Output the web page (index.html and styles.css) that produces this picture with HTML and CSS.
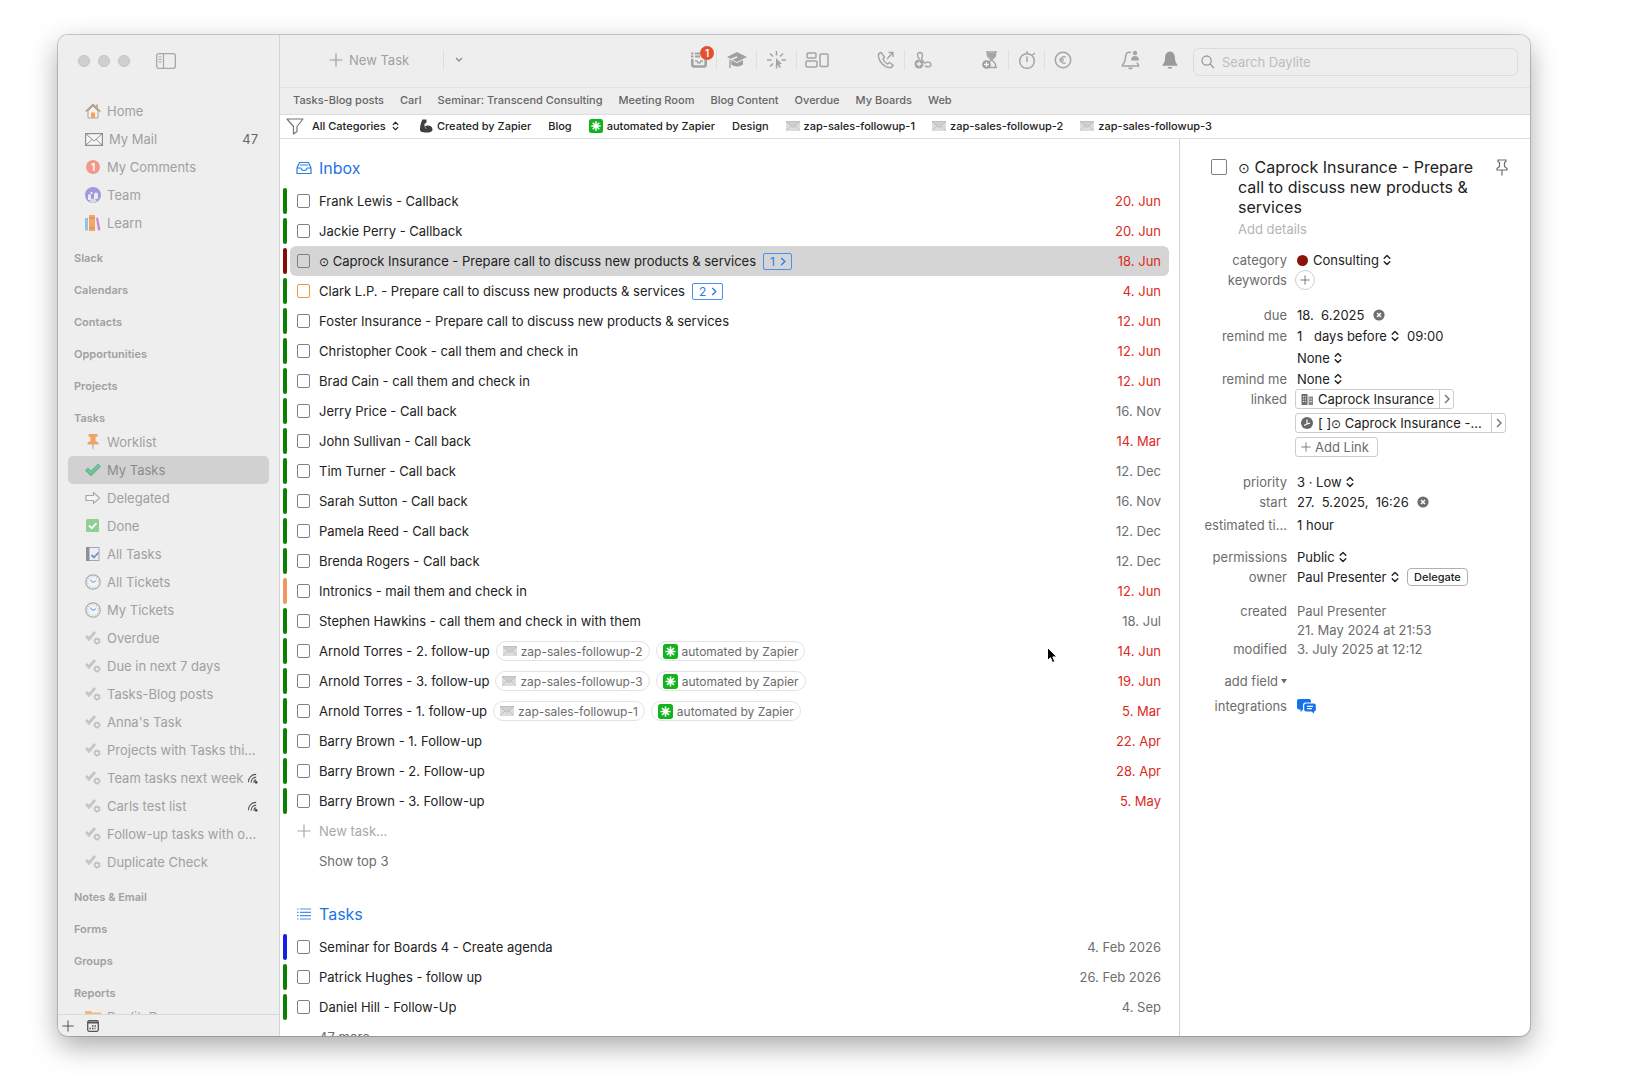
FILE: index.html
```html
<!DOCTYPE html>
<html lang="en">
<head>
    <meta charset="UTF-8">
    <meta name="viewport" content="width=device-width, initial-scale=1.0">
    <title>Daylite - My Tasks</title>
    <link rel="stylesheet" href="styles.css">
</head>
<body>
    <!-- shared icons -->
    <svg class="sprite" aria-hidden="true">
        <symbol id="smart" viewBox="0 0 16 16">
            <path d="M1 6l3 3 6-7" fill="none" stroke="#c6c6c6" stroke-width="3"/>
            <circle cx="12" cy="11" r="2.2" fill="none" stroke="#bdbdbd" stroke-width="1.4"/>
            <circle cx="12" cy="11" r="3.2" fill="none" stroke="#bdbdbd" stroke-width="1" stroke-dasharray="1.2 1.3"/>
        </symbol>
        <symbol id="ticket" viewBox="0 0 16 16">
            <circle cx="8" cy="8" r="7.2" fill="#f4f4f4" stroke="#a9a9ab" stroke-width="1.2"/>
            <circle cx="8" cy="8" r="5.4" fill="none" stroke="#b5b5b8" stroke-width="1.3" stroke-dasharray=".8 2.03"/>
            <path d="M5 5.6L8 8.4l3-1.6" fill="none" stroke="#8cb4e6" stroke-width="1.2"/>
        </symbol>
        <symbol id="shared" viewBox="0 0 12 12">
            <path d="M1.5 10C1.5 5 5 1.5 10 1.5M4.5 10.500c0-3.500 2.500-6 5.500-6M7.500 10.500c0-2 1-3 2.500-3" fill="none" stroke="#555" stroke-width="1.100"/>
            <circle cx="10" cy="10.200" r="1.400" fill="#444"/>
        </symbol>
        <symbol id="updown" viewBox="0 0 8 12">
            <path d="M1.200 4.300L4 1.500l2.800 2.800M1.200 7.700L4 10.500l2.800-2.800" fill="none" stroke="currentColor" stroke-width="1.400" stroke-linecap="round" stroke-linejoin="round"/>
        </symbol>
        <symbol id="mail" viewBox="0 0 14 10">
            <rect width="14" height="10" rx="1" fill="#dcdcdc"/>
            <path d="M0 9.500L5 5M14 9.500L9 5" stroke="#c2c2c2" fill="none"/>
            <path d="M0 .5h14L7 6.500z" fill="#cfcfcf" stroke="#b4b4b4" stroke-width=".7"/>
        </symbol>
        <symbol id="zap" viewBox="0 0 14 14">
            <rect width="14" height="14" rx="2.500" fill="#10b51c"/>
            <path d="M7 2.300v9.400M2.300 7h9.400M3.700 3.700l6.600 6.600M10.300 3.700l-6.600 6.600" stroke="#fff" stroke-width="1.500"/>
        </symbol>
        <symbol id="plus" viewBox="0 0 14 14">
            <path d="M7 .5v13M.5 7h13" stroke="currentColor" stroke-width="1.200" fill="none"/>
        </symbol>
        <symbol id="right" viewBox="0 0 6 10">
            <path d="M1 1l4 4-4 4" fill="none" stroke="currentColor" stroke-width="1.500"/>
        </symbol>
        <symbol id="clear" viewBox="0 0 12 12">
            <circle cx="6" cy="6" r="5.600" fill="#6e6e6e"/>
            <path d="M4 4l4 4M8 4L4 8" stroke="#fff" stroke-width="1.500"/>
        </symbol>
    </svg>

    <div class="window">
        <aside class="sidebar">
            <div class="titlebar">
                <span class="light"></span><span class="light"></span><span class="light"></span>
                <button class="plain toggle" aria-label="Toggle sidebar">
                    <svg width="20" height="16" viewBox="0 0 20 16"><rect x=".7" y=".7" width="18.600" height="14.600" rx="2" fill="none" stroke="#a6a6a6" stroke-width="1.300"/><path d="M7.500 1v14M2.500 4h3M2.500 6.500h3M2.500 9h3" stroke="#a6a6a6" stroke-width="1.200"/></svg>
                </button>
            </div>
            <nav class="nav">
                <a class="nav-item" href="#">
                    <svg class="nav-icon" viewBox="0 0 16 16"><path d="M3 8v7h10V8L8 3z" fill="#f4f1ee" stroke="#a9a39c"/><path d="M.8 8.500L8 1.500l7.200 7" fill="none" stroke="#b29a80" stroke-width="1.500"/><path d="M12 1.500v3" stroke="#b29a80" stroke-width="1.500"/><rect x="6" y="9.500" width="4" height="5.500" fill="#f2a262"/></svg>
                    <span class="nav-text">Home</span>
                </a>
                <a class="nav-item wide" href="#">
                    <svg class="nav-icon" viewBox="0 0 18 13"><rect x=".6" y=".6" width="16.800" height="11.800" fill="#f6f6f6" stroke="#8f8f92" stroke-width="1.200"/><path d="M1 1l8 7 8-7M1 12l6-5.600M17 12l-6-5.600" fill="none" stroke="#8f8f92"/></svg>
                    <span class="nav-text">My Mail</span>
                    <span class="count">47</span>
                </a>
                <a class="nav-item" href="#">
                    <span class="comment-badge">1</span>
                    <span class="nav-text">My Comments</span>
                </a>
                <a class="nav-item" href="#">
                    <svg class="nav-icon" viewBox="0 0 16 16"><circle cx="8" cy="8" r="8" fill="#9d9bdc"/><path d="M3 13V8.500a1.500 1.500 0 013 0V13zM9 12V7.500a2 2 0 014 0V12z" fill="#eceaf8"/><path d="M4.500 15a8 8 0 007.500-.3l-2-3H6z" fill="#d9dcd4"/><circle cx="6.500" cy="6" r="1" fill="#fff"/></svg>
                    <span class="nav-text">Team</span>
                </a>
                <a class="nav-item" href="#">
                    <svg class="nav-icon" viewBox="0 0 16 16"><rect x="0" y="3" width="3" height="12.500" fill="#8fc3ea"/><rect x="4" y="0" width="6" height="16" fill="#f1a766"/><path d="M4 3h6M4 13h6" stroke="#d98b4b"/><path d="M11 3l2-.5 2.500 12.500-2.500.5z" fill="#c58bd6"/></svg>
                    <span class="nav-text">Learn</span>
                </a>

                <h2 class="nav-head">Slack</h2>
                <h2 class="nav-head">Calendars</h2>
                <h2 class="nav-head">Contacts</h2>
                <h2 class="nav-head">Opportunities</h2>
                <h2 class="nav-head">Projects</h2>
                <h2 class="nav-head">Tasks</h2>
                <a class="nav-item" href="#">
                    <svg class="nav-icon" viewBox="0 0 16 16"><path d="M7.300 9h1.400v5L8 16l-.7-2z" fill="#b5b5b5"/><path d="M3.500 0h9v2.500l-2 .5v4l3 1.500V10.500h-11V8.500l3-1.500V3l-2-.5z" fill="#eda465"/></svg>
                    <span class="nav-text">Worklist</span>
                </a>
                <a class="nav-item active" href="#">
                    <svg class="nav-icon" viewBox="0 0 16 16"><path d="M1.500 7l4.500 4.500L14.500 3" fill="none" stroke="#7d9a8c" stroke-width="4"/><path d="M2 7.200l4 4L14 3.300" fill="none" stroke="#5fcf98" stroke-width="2.600"/></svg>
                    <span class="nav-text">My Tasks</span>
                </a>
                <a class="nav-item" href="#">
                    <svg class="nav-icon" viewBox="0 0 16 16"><path d="M1 5.500h7.500V2.500L14.500 8l-6 5.500v-3H1z" fill="#f5f5f7" stroke="#a8a8ae" stroke-width="1.200"/></svg>
                    <span class="nav-text">Delegated</span>
                </a>
                <a class="nav-item" href="#">
                    <svg class="nav-icon" viewBox="0 0 16 16"><rect x="1" y="1" width="13" height="13" rx="1.500" fill="#8fcf93"/><path d="M4 7.500l2.800 2.800L11.500 5" fill="none" stroke="#fff" stroke-width="1.800"/></svg>
                    <span class="nav-text">Done</span>
                </a>
                <a class="nav-item" href="#">
                    <svg class="nav-icon" viewBox="0 0 16 16"><rect x="1.500" y="1.500" width="12.500" height="13" fill="#eceef3" stroke="#a3a6b0"/><rect x="1" y="1" width="3.500" height="14" fill="#8c8f9c"/><path d="M6.500 9l2.500 2.500 4.500-5" fill="none" stroke="#7492c0" stroke-width="1.800"/></svg>
                    <span class="nav-text">All Tasks</span>
                </a>
                <a class="nav-item" href="#"><svg class="nav-icon"><use href="#ticket"/></svg><span class="nav-text">All Tickets</span></a>
                <a class="nav-item" href="#"><svg class="nav-icon"><use href="#ticket"/></svg><span class="nav-text">My Tickets</span></a>
                <a class="nav-item" href="#"><svg class="nav-icon"><use href="#smart"/></svg><span class="nav-text">Overdue</span></a>
                <a class="nav-item" href="#"><svg class="nav-icon"><use href="#smart"/></svg><span class="nav-text">Due in next 7 days</span></a>
                <a class="nav-item" href="#"><svg class="nav-icon"><use href="#smart"/></svg><span class="nav-text">Tasks-Blog posts</span></a>
                <a class="nav-item" href="#"><svg class="nav-icon"><use href="#smart"/></svg><span class="nav-text">Anna's Task</span></a>
                <a class="nav-item" href="#"><svg class="nav-icon"><use href="#smart"/></svg><span class="nav-text">Projects with Tasks thi...</span></a>
                <a class="nav-item" href="#"><svg class="nav-icon"><use href="#smart"/></svg><span class="nav-text">Team tasks next week</span><svg class="shared"><use href="#shared"/></svg></a>
                <a class="nav-item" href="#"><svg class="nav-icon"><use href="#smart"/></svg><span class="nav-text">Carls test list</span><svg class="shared"><use href="#shared"/></svg></a>
                <a class="nav-item" href="#"><svg class="nav-icon"><use href="#smart"/></svg><span class="nav-text">Follow-up tasks with o...</span></a>
                <a class="nav-item" href="#"><svg class="nav-icon"><use href="#smart"/></svg><span class="nav-text">Duplicate Check</span></a>

                <h2 class="nav-head">Notes &amp; Email</h2>
                <h2 class="nav-head">Forms</h2>
                <h2 class="nav-head">Groups</h2>
                <h2 class="nav-head">Reports</h2>
                <a class="nav-item" href="#">
                    <svg class="nav-icon" viewBox="0 0 16 16"><path d="M0 2h6l1 1.500h9V14H0z" fill="#f3b780"/></svg>
                    <span class="nav-text">DayliteDocs</span>
                </a>
            </nav>
            <div class="sidebar-foot">
                <button class="plain" aria-label="Add"><svg width="12" height="12"><use href="#plus"/></svg></button>
                <button class="plain" aria-label="Show calendar">
                    <svg width="12" height="12" viewBox="0 0 12 12"><rect x=".7" y=".7" width="10.600" height="10.600" rx="1.500" fill="none" stroke="#555" stroke-width="1.300"/><path d="M1 2.500h10" stroke="#555" stroke-width="2"/><path d="M5 6h5M2.500 8.500h6" stroke="#555" stroke-width="1.400" stroke-dasharray="1.500 1"/></svg>
                </button>
            </div>
        </aside>

        <div class="main">
            <header class="toolbar">
                <button class="plain new-task"><svg width="14" height="14"><use href="#plus"/></svg>New Task</button>
                <button class="plain new-more" aria-label="More new items">
                    <svg width="8" height="6" viewBox="0 0 8 6"><path d="M1 1l3 3 3-3" fill="none" stroke="#8a8a8a" stroke-width="1.300"/></svg>
                </button>
                <div class="tools">
                    <button class="plain tool" aria-label="Inbox, 1 new">
                        <svg width="24" height="18" viewBox="-6 0 24 18"><path d="M2.300 8v5.500q0 2 2 2h9.400q2 0 2-2V8" fill="none" stroke="#a2a2a2" stroke-width="2.600"/><path d="M5 10h2q.5 2 2 2t2-2h2" fill="none" stroke="#a2a2a2" stroke-width="1.400"/><path d="M1 2.500h2.500M5 2.500h5M1 5.500h2.500M5 5.500h5" stroke="#a2a2a2" stroke-width="1.800"/></svg>
                        <span class="tool-badge">1</span>
                    </button>
                    <button class="plain tool" aria-label="Learn">
                        <svg width="20" height="18" viewBox="0 0 20 18"><path d="M10 1l10 5-10 5L0 6z" fill="#a0a0a0"/><path d="M4 9v4.500q6 4 12 0V9l-6 3z" fill="#a0a0a0"/><path d="M10 6l-6.500 2.500V16" fill="none" stroke="#eee" stroke-width="1.500"/><path d="M3 8.500V17" stroke="#a0a0a0" stroke-width="1.400"/></svg>
                    </button>
                    <button class="plain tool" aria-label="Actions">
                        <svg width="19" height="18" viewBox="0 0 19 18"><path d="M9.500 0v4.500M9.500 14v3.500M0 9h4.500M14.500 9H19M3 2.500l3 3M16 2.500l-3 3M3 15.500l3-3" stroke="#a4a4a4" stroke-width="1.500"/><path d="M9 7l6 6-2.600.2 1.400 3-1.500.7-1.400-3L9 15.500z" fill="#a4a4a4"/></svg>
                    </button>
                    <button class="plain tool" aria-label="Boards">
                        <svg width="24" height="16" viewBox="0 0 24 16"><g fill="none" stroke="#a4a4a4" stroke-width="1.500"><rect x="2" y="1" width="9" height="5" rx="1.200"/><rect x="1" y="9" width="11" height="6" rx="1.200"/><rect x="15" y="2" width="8" height="12.500" rx="1.200"/></g></svg>
                    </button>
                </div>
                <div class="tools narrow">
                    <button class="plain tool" aria-label="Call">
                        <svg width="18" height="18" viewBox="0 0 18 18"><path d="M4 1.500c-2 .5-3 2-2.500 4.500 1 5 5 9.500 10 10.500 2.500.5 4-.5 4.500-2.500l-3.500-2.500-2 1.500c-2-1-3.700-3-4.500-5l1.500-2z" fill="none" stroke="#a4a4a4" stroke-width="1.400" stroke-linejoin="round"/><path d="M10 8l6-6.500M11.500 1.500H16V6" fill="none" stroke="#a4a4a4" stroke-width="1.300"/></svg>
                    </button>
                    <button class="plain tool" aria-label="Log call">
                        <svg width="18" height="18" viewBox="0 0 18 18"><path d="M5.500 8C2.500 5 3 1.500 6 1.500S9 6 7.500 7.500q1.200 3 3.500 4.500c2-1.500 6-1 6 1.500s-3 3-6 1.500" fill="none" stroke="#a4a4a4" stroke-width="1.400"/><circle cx="5" cy="13" r="4.500" fill="#a4a4a4"/><path d="M5 10.500v5M2.500 13h5" stroke="#f2f2f2" stroke-width="1.300"/></svg>
                    </button>
                </div>
                <div class="tools narrow">
                    <button class="plain tool" aria-label="Add time">
                        <svg width="18" height="18" viewBox="0 0 18 18"><path d="M5 1h11M7 16.500h9M6.500 1.500v2.500q0 2 4 5-4 3-4 5M14.500 1.500v2.500q0 2-4 5 4 3 4 5v2" fill="none" stroke="#a4a4a4" stroke-width="1.500"/><path d="M7 2h7v3l-3.500 3L7 5z" fill="#a4a4a4"/><circle cx="5.500" cy="13.500" r="4.300" fill="#9c9c9c"/><path d="M5.500 11v5M3 13.500h5" stroke="#f2f2f2" stroke-width="1.300"/></svg>
                    </button>
                    <button class="plain tool" aria-label="Timer">
                        <svg width="18" height="18" viewBox="0 0 18 18"><circle cx="9" cy="10" r="7.300" fill="none" stroke="#a4a4a4" stroke-width="1.500"/><path d="M9 5.500V11M9 0v2.500M14.500 4L17 2" stroke="#a4a4a4" stroke-width="1.500"/></svg>
                    </button>
                    <button class="plain tool" aria-label="Billing">
                        <svg width="18" height="18" viewBox="0 0 18 18"><circle cx="9" cy="9" r="7.700" fill="none" stroke="#a4a4a4" stroke-width="1.500"/><path d="M11.800 6.200a3.300 3.300 0 100 5.600M5.300 8.200h4.700M5.300 10h4.700" fill="none" stroke="#a4a4a4" stroke-width="1.200"/></svg>
                    </button>
                </div>
                <div class="tools loose">
                    <button class="plain tool" aria-label="Team activity">
                        <svg width="19" height="20" viewBox="0 0 19 20"><path d="M10 2.500C6 1.500 4.500 4 4.500 7.500q0 4-3 7.500v1h16v-1q-1-1-1.500-2.500" fill="none" stroke="#a4a4a4" stroke-width="1.500"/><circle cx="14" cy="3" r="2.200" fill="#a4a4a4"/><path d="M10 10.500q0-4.500 4-4.500t4 4.500z" fill="#a4a4a4"/><path d="M7 17.500h5q-.5 2-2.500 2t-2.500-2z" fill="#a4a4a4"/></svg>
                    </button>
                    <button class="plain tool" aria-label="Notifications">
                        <svg width="16" height="18" viewBox="0 0 16 18"><path d="M8 .5c-4 .5-5 3.500-5 7 0 3-1 4.500-2.500 6.500v.7h15V14C14 12 13 10.500 13 7.500c0-3.500-1-6.500-5-7z" fill="#999"/><path d="M5.500 16h5q-.5 1.700-2.500 1.700T5.500 16z" fill="#999"/></svg>
                    </button>
                </div>
                <div class="search">
                    <svg width="14" height="14" viewBox="0 0 14 14"><circle cx="5.600" cy="5.600" r="4.600" fill="none" stroke="#9a9a9a" stroke-width="1.300"/><path d="M9 9l4 4" stroke="#9a9a9a" stroke-width="1.500"/></svg>
                    <input type="search" placeholder="Search Daylite" aria-label="Search Daylite">
                </div>
            </header>

            <nav class="favorites">
                <a href="#">Tasks-Blog posts</a>
                <a href="#">Carl</a>
                <a href="#">Seminar: Transcend Consulting</a>
                <a href="#">Meeting Room</a>
                <a href="#">Blog Content</a>
                <a href="#">Overdue</a>
                <a href="#">My Boards</a>
                <a href="#">Web</a>
            </nav>

            <div class="filters">
                <svg class="funnel" width="18" height="17" viewBox="0 0 18 17"><path d="M1 1h16l-6 7.500v5l-3.500 2.500V8.500z" fill="none" stroke="#777" stroke-width="1.200" stroke-linejoin="round"/></svg>
                <span class="picker">
                    <select aria-label="Category"><option>All Categories</option></select>
                    <svg width="7" height="10"><use href="#updown"/></svg>
                </span>
                <button class="plain filter">
                    <svg width="14" height="14" viewBox="0 0 14 14"><path d="M3.500.5h4v3l-2 1.500v2.500c3-2 8-.5 8 3 0 2.500-3 3-6.500 3-4 0-6.500-.5-6-4C1.300 6 2 3 3.500.5z" fill="#3f3f3f"/><path d="M5.500 7.500q2 .5 1.500 2.500" stroke="#999" fill="none"/></svg>
                    Created by Zapier
                </button>
                <button class="plain filter">Blog</button>
                <button class="plain filter"><svg width="14" height="14"><use href="#zap"/></svg>automated by Zapier</button>
                <button class="plain filter">Design</button>
                <button class="plain filter"><svg width="14" height="10"><use href="#mail"/></svg>zap-sales-followup-1</button>
                <button class="plain filter"><svg width="14" height="10"><use href="#mail"/></svg>zap-sales-followup-2</button>
                <button class="plain filter"><svg width="14" height="10"><use href="#mail"/></svg>zap-sales-followup-3</button>
            </div>

            <div class="content">
                <main class="list">
                    <h1 class="group-title">
                        <svg width="16" height="14" viewBox="0 0 16 14"><path d="M1 7l2.500-5.500h9L15 7v5.500H1z M1 7h4q.5 2.500 3 2.500t3-2.500h4M4 4h8" fill="none" stroke="#2c7be5" stroke-width="1.200" stroke-linejoin="round"/></svg>
                        Inbox
                    </h1>
                    <ul class="tasks">
                        <li class="task green"><div class="task-body"><input type="checkbox" id="t1"><label for="t1">Frank Lewis - Callback</label><time class="late">20. Jun</time></div></li>
                        <li class="task green"><div class="task-body"><input type="checkbox" id="t2"><label for="t2">Jackie Perry - Callback</label><time class="late">20. Jun</time></div></li>
                        <li class="task darkred selected"><div class="task-body"><input type="checkbox" id="t3"><label for="t3"><span class="sun">⊙</span> Caprock Insurance - Prepare call to discuss new products &amp; services</label><button class="plain subtasks">1 <svg width="6" height="9"><use href="#right"/></svg></button><time class="late">18. Jun</time></div></li>
                        <li class="task green"><div class="task-body"><input type="checkbox" id="t4" class="orange"><label for="t4">Clark L.P. - Prepare call to discuss new products &amp; services</label><button class="plain subtasks">2 <svg width="6" height="9"><use href="#right"/></svg></button><time class="late">4. Jun</time></div></li>
                        <li class="task green"><div class="task-body"><input type="checkbox" id="t5"><label for="t5">Foster Insurance - Prepare call to discuss new products &amp; services</label><time class="late">12. Jun</time></div></li>
                        <li class="task green"><div class="task-body"><input type="checkbox" id="t6"><label for="t6">Christopher Cook - call them and check in</label><time class="late">12. Jun</time></div></li>
                        <li class="task green"><div class="task-body"><input type="checkbox" id="t7"><label for="t7">Brad Cain - call them and check in</label><time class="late">12. Jun</time></div></li>
                        <li class="task green"><div class="task-body"><input type="checkbox" id="t8"><label for="t8">Jerry Price - Call back</label><time>16. Nov</time></div></li>
                        <li class="task green"><div class="task-body"><input type="checkbox" id="t9"><label for="t9">John Sullivan - Call back</label><time class="late">14. Mar</time></div></li>
                        <li class="task green"><div class="task-body"><input type="checkbox" id="t10"><label for="t10">Tim Turner - Call back</label><time>12. Dec</time></div></li>
                        <li class="task green"><div class="task-body"><input type="checkbox" id="t11"><label for="t11">Sarah Sutton - Call back</label><time>16. Nov</time></div></li>
                        <li class="task green"><div class="task-body"><input type="checkbox" id="t12"><label for="t12">Pamela Reed - Call back</label><time>12. Dec</time></div></li>
                        <li class="task green"><div class="task-body"><input type="checkbox" id="t13"><label for="t13">Brenda Rogers - Call back</label><time>12. Dec</time></div></li>
                        <li class="task salmon"><div class="task-body"><input type="checkbox" id="t14"><label for="t14">Intronics - mail them and check in</label><time class="late">12. Jun</time></div></li>
                        <li class="task green"><div class="task-body"><input type="checkbox" id="t15"><label for="t15">Stephen Hawkins - call them and check in with them</label><time>18. Jul</time></div></li>
                        <li class="task green"><div class="task-body"><input type="checkbox" id="t16"><label for="t16">Arnold Torres - 2. follow-up</label><span class="tag"><svg width="14" height="10"><use href="#mail"/></svg>zap-sales-followup-2</span><span class="tag"><svg width="15" height="15"><use href="#zap"/></svg>automated by Zapier</span><time class="late">14. Jun</time></div></li>
                        <li class="task green"><div class="task-body"><input type="checkbox" id="t17"><label for="t17">Arnold Torres - 3. follow-up</label><span class="tag"><svg width="14" height="10"><use href="#mail"/></svg>zap-sales-followup-3</span><span class="tag"><svg width="15" height="15"><use href="#zap"/></svg>automated by Zapier</span><time class="late">19. Jun</time></div></li>
                        <li class="task green"><div class="task-body"><input type="checkbox" id="t18"><label for="t18">Arnold Torres - 1. follow-up</label><span class="tag"><svg width="14" height="10"><use href="#mail"/></svg>zap-sales-followup-1</span><span class="tag"><svg width="15" height="15"><use href="#zap"/></svg>automated by Zapier</span><time class="late">5. Mar</time></div></li>
                        <li class="task green"><div class="task-body"><input type="checkbox" id="t19"><label for="t19">Barry Brown - 1. Follow-up</label><time class="late">22. Apr</time></div></li>
                        <li class="task green"><div class="task-body"><input type="checkbox" id="t20"><label for="t20">Barry Brown - 2. Follow-up</label><time class="late">28. Apr</time></div></li>
                        <li class="task green"><div class="task-body"><input type="checkbox" id="t21"><label for="t21">Barry Brown - 3. Follow-up</label><time class="late">5. May</time></div></li>
                    </ul>
                    <button class="plain list-link add"><svg width="14" height="14"><use href="#plus"/></svg>New task...</button>
                    <button class="plain list-link">Show top 3</button>

                    <h1 class="group-title second">
                        <svg width="16" height="12" viewBox="0 0 16 12"><path d="M4 1h11M4 4.300h11M4 7.600h11M4 11h11" stroke="#4a90ea" stroke-width="1.200"/><path d="M1 1h1.500M1 4.300h1.500M1 7.600h1.500M1 11h1.500" stroke="#4a90ea" stroke-width="1.200"/></svg>
                        Tasks
                    </h1>
                    <ul class="tasks">
                        <li class="task blue"><div class="task-body"><input type="checkbox" id="t22"><label for="t22">Seminar for Boards 4 - Create agenda</label><time>4. Feb 2026</time></div></li>
                        <li class="task green"><div class="task-body"><input type="checkbox" id="t23"><label for="t23">Patrick Hughes - follow up</label><time>26. Feb 2026</time></div></li>
                        <li class="task green"><div class="task-body"><input type="checkbox" id="t24"><label for="t24">Daniel Hill - Follow-Up</label><time>4. Sep</time></div></li>
                    </ul>
                    <button class="plain list-link">47 more...</button>

                    <!-- mouse pointer -->
                    <svg class="pointer" width="12" height="18" viewBox="0 0 12 18"><path d="M1.500 1.500v12.800l3-2.600 2 4.800 2.300-1-2-4.600h4z" fill="#000" stroke="#fff" stroke-width="1"/></svg>
                </main>

                <section class="detail">
                    <div class="detail-head">
                        <input type="checkbox" class="big" id="done">
                        <div class="detail-title">
                            <label for="done"><span class="sun">⊙</span> Caprock Insurance - Prepare call to discuss new products &amp; services</label>
                            <input type="text" placeholder="Add details" aria-label="Details">
                        </div>
                        <button class="plain pin" aria-label="Pin">
                            <svg width="12" height="18" viewBox="0 0 12 18"><path d="M2 1h8v1.500L8.500 3.500v4L11 9.500V11H1V9.500l2.500-2v-4L2 2.500zM6 11v5.500" fill="none" stroke="#6c6c6c" stroke-width="1.200"/></svg>
                        </button>
                    </div>

                    <div class="fields">
                        <div class="field"><label for="category">category</label>
                            <div class="value"><span class="dot"></span><span class="picker"><select id="category"><option>Consulting</option></select><svg width="8" height="12"><use href="#updown"/></svg></span></div>
                        </div>
                        <div class="field"><span class="name">keywords</span>
                            <div class="value boxed"><button class="plain round" aria-label="Add keyword"><svg width="10" height="10"><use href="#plus"/></svg></button></div>
                        </div>
                    </div>

                    <div class="fields">
                        <div class="field"><label for="due">due</label>
                            <div class="value"><input type="text" id="due" class="date" value="18.  6.2025"><button class="plain" aria-label="Clear due date"><svg width="12" height="12"><use href="#clear"/></svg></button></div>
                        </div>
                        <div class="field mid"><label for="days">remind me</label>
                            <div class="value"><input type="text" id="days" class="num" value="1"><span class="picker"><select aria-label="Reminder unit"><option>days before</option></select><svg width="8" height="12"><use href="#updown"/></svg></span><input type="text" class="clock" aria-label="Reminder time" value="09:00"></div>
                        </div>
                        <div class="field mid"><span class="name"></span>
                            <div class="value"><span class="picker"><select aria-label="Repeat reminder"><option>None</option></select><svg width="8" height="12"><use href="#updown"/></svg></span></div>
                        </div>
                        <div class="field"><label for="remind2">remind me</label>
                            <div class="value"><span class="picker"><select id="remind2"><option>None</option></select><svg width="8" height="12"><use href="#updown"/></svg></span></div>
                        </div>
                        <div class="field"><span class="name">linked</span>
                            <div class="value boxed links">
                                <button class="plain link">
                                    <svg width="12" height="11" viewBox="0 0 12 11"><path d="M.5 0h6v11h-6z" fill="#6f6f6f"/><path d="M7.500 2.500H12V11H7.500z" fill="#8a8a8a"/><path d="M2 2.500h3M2 5h3M2 7.500h3M8.500 5h2.500M8.500 7.500h2.500" stroke="#fff" stroke-width="1" stroke-dasharray="1 .8"/></svg>
                                    <span>Caprock Insurance</span><i class="go"><svg width="6" height="10"><use href="#right"/></svg></i>
                                </button>
                                <button class="plain link long">
                                    <svg width="12" height="12" viewBox="0 0 12 12"><circle cx="6" cy="6" r="6" fill="#666"/><path d="M6 2.500V7l3-.8M6 7L3 8.500" fill="none" stroke="#fff" stroke-width="1.200"/></svg>
                                    <span>[ ]<span class="sun">⊙</span> Caprock Insurance -...</span><i class="go"><svg width="6" height="10"><use href="#right"/></svg></i>
                                </button>
                                <button class="plain link add-link"><svg width="10" height="10"><use href="#plus"/></svg>Add Link</button>
                            </div>
                        </div>
                    </div>

                    <div class="fields">
                        <div class="field"><label for="priority">priority</label>
                            <div class="value"><span class="picker"><select id="priority"><option>3 · Low</option></select><svg width="8" height="12"><use href="#updown"/></svg></span></div>
                        </div>
                        <div class="field"><label for="start">start</label>
                            <div class="value"><input type="text" id="start" class="datetime" value="27.  5.2025,  16:26"><button class="plain" aria-label="Clear start date"><svg width="12" height="12"><use href="#clear"/></svg></button></div>
                        </div>
                        <div class="field tall"><label for="estimate">estimated ti...</label>
                            <div class="value"><input type="text" id="estimate" class="date" value="1 hour"></div>
                        </div>
                    </div>

                    <div class="fields close">
                        <div class="field"><label for="perm">permissions</label>
                            <div class="value"><span class="picker"><select id="perm"><option>Public</option></select><svg width="8" height="12"><use href="#updown"/></svg></span></div>
                        </div>
                        <div class="field"><label for="owner">owner</label>
                            <div class="value"><span class="picker"><select id="owner"><option>Paul Presenter</option></select><svg width="8" height="12"><use href="#updown"/></svg></span><button class="plain delegate">Delegate</button></div>
                        </div>
                    </div>

                    <div class="fields info">
                        <div class="field"><span class="name">created</span><div class="value">Paul Presenter</div></div>
                        <div class="field"><span class="name"></span><div class="value">21. May 2024 at 21:53</div></div>
                        <div class="field"><span class="name">modified</span><div class="value">3. July 2025 at 12:12</div></div>
                    </div>

                    <div class="fields last">
                        <div class="field"><button class="plain name">add field <svg width="6" height="5" viewBox="0 0 6 5"><path d="M0 0h6L3 4.500z" fill="#6c6c6c"/></svg></button></div>
                        <div class="field"><span class="name">integrations</span>
                            <div class="value"><button class="plain" aria-label="Chat integration">
                                <svg width="19" height="15" viewBox="0 0 19 15"><path d="M2 0h10q2 0 2 2v1.500H8.500Q6 3.500 6 6v4.500L3.500 13v-2.500H2Q0 10.500 0 8.500V2Q0 0 2 0z" fill="#1273ea"/><path d="M9 4.500h8q1.800 0 1.800 1.800v4.400q0 1.800-1.800 1.800v2L14.500 12.500H9q-1.800 0-1.800-1.800V6.300Q7.200 4.500 9 4.500z" fill="#1273ea"/><path d="M10 7.300h6M10 9.700h5" stroke="#fff" stroke-width="1.200"/></svg>
                            </button></div>
                        </div>
                    </div>
                </section>
            </div>
        </div>
    </div>
</body>
</html>
```
FILE: styles.css
```css
* {
    box-sizing: border-box;
}

body {
    margin: 0;
    padding: 35px 122px 52px 58px;
    height: 100vh;
    background: #fff;
    font-family: Inter, "Liberation Sans", sans-serif;
    font-size: 13px;
    color: #222;
    overflow: hidden;
}

.sprite {
    display: none;
}

svg {
    flex: none;
}

a {
    color: inherit;
    text-decoration: none;
}

.plain, input, select {
    font: inherit;
    color: inherit;
    background: none;
    border: 0;
    padding: 0;
    margin: 0;
    outline: none;
}

.plain {
    display: flex;
    align-items: center;
}

select {
    appearance: none;
}

.picker {
    display: inline-flex;
    align-items: center;
    gap: 4px;
}

.window {
    display: flex;
    height: 100%;
    border-radius: 10px;
    overflow: hidden;
    background: #fff;
    box-shadow: 0 0 0 1px rgba(0, 0, 0, 0.18), 0 10px 28px rgba(0, 0, 0, 0.34);
}

/* sidebar */
.sidebar {
    flex: 0 0 222px;
    min-width: 0;
    display: flex;
    flex-direction: column;
    background: #eeeeee;
    border-right: 1px solid #d4d4d4;
    color: #a0a0a0;
}

.titlebar {
    flex: none;
    display: flex;
    align-items: center;
    gap: 8px;
    height: 51px;
    padding-left: 20px;
}

.light {
    width: 12px;
    height: 12px;
    border-radius: 50%;
    background: #cfcfcf;
    border: 1px solid #c2c2c2;
}

.toggle {
    margin-left: 18px;
}

.nav {
    flex: 1;
    min-height: 0;
    padding: 11px 10px 0;
    overflow: hidden;
}

.nav-item {
    display: flex;
    align-items: center;
    gap: 6px;
    height: 28px;
    padding: 0 11px 0 17px;
    border-radius: 5px;
    white-space: nowrap;
}

.nav-item.active {
    background: #d1d1d1;
    color: #8c8c8c;
}

.nav-icon {
    width: 16px;
    height: 16px;
}

.wide .nav-icon {
    width: 18px;
    height: 13px;
}

.nav-text {
    flex: 1;
}

.count {
    color: #666;
}

.comment-badge {
    width: 14px;
    height: 14px;
    margin: 0 1px;
    border-radius: 50%;
    background: #f2988a;
    color: #fff;
    font-size: 10px;
    font-weight: 600;
    line-height: 14px;
    text-align: center;
}

.shared {
    width: 11px;
    height: 11px;
    margin-left: -2px;
}

.nav-head {
    height: 20px;
    margin: 12px 0 0;
    padding-left: 6px;
    font-size: 11px;
    font-weight: 600;
    line-height: 20px;
}

.nav-item + .nav-head {
    margin-top: 11px;
}

.sidebar-foot {
    flex: none;
    display: flex;
    align-items: center;
    gap: 13px;
    height: 22px;
    padding-left: 4px;
    border-top: 1px solid #d9d9d9;
    color: #555;
}

/* toolbar */
.main {
    flex: 1;
    min-width: 0;
    display: flex;
    flex-direction: column;
}

.toolbar {
    flex: none;
    display: flex;
    align-items: center;
    height: 52px;
    padding: 0 12px 2px 49px;
    background: #eeeeee;
    color: #a0a0a0;
}

.new-task {
    gap: 6px;
}

.new-more {
    justify-content: center;
    width: 31px;
    height: 20px;
    margin-left: 34px;
    border-left: 1px solid #dedede;
}

.tools {
    display: flex;
    margin-right: 32px;
}

.new-more + .tools {
    margin-left: auto;
}

.tools.loose {
    margin: 0 3px 0 -2px;
}

.tool {
    position: relative;
    justify-content: center;
    width: 40px;
    height: 20px;
}

.narrow .tool {
    width: 36px;
}

.tool + .tool {
    border-left: 1px solid #e0e0e0;
}

.loose .tool {
    border: 0;
}

.tool-badge {
    position: absolute;
    top: -4px;
    right: 2px;
    width: 14px;
    height: 14px;
    border-radius: 50%;
    background: #e2502c;
    color: #fff;
    font-size: 10px;
    font-weight: 600;
    line-height: 14px;
    text-align: center;
}

.search {
    display: flex;
    align-items: center;
    gap: 7px;
    width: 325px;
    height: 28px;
    margin-top: 3px;
    padding: 0 7px;
    border: 1px solid #dcdcdc;
    border-radius: 6px;
}

.search input {
    flex: 1;
}

.search input::placeholder {
    color: #bdbdbd;
}

.favorites {
    flex: none;
    display: flex;
    align-items: center;
    gap: 16px;
    height: 28px;
    padding: 0 0 2px 13px;
    background: #eeeeee;
    border-top: 1px solid #e2e2e2;
    border-bottom: 1px solid #dcdcdc;
    font-size: 11px;
    font-weight: 500;
    color: #666;
}

.filters {
    flex: none;
    display: flex;
    align-items: center;
    gap: 17px;
    height: 24px;
    padding: 0 0 1px 6px;
    border-bottom: 1px solid #dedede;
    font-size: 11px;
    font-weight: 500;
}

.filters .picker {
    gap: 6px;
    margin: 0 3px 0 -9px;
}

.filter {
    gap: 4px;
}

/* task list */
.content {
    flex: 1;
    min-height: 0;
    display: flex;
}

.list {
    position: relative;
    flex: 1;
    min-width: 0;
    padding: 15px 10px 0 3px;
    overflow: hidden;
}

.group-title {
    display: flex;
    align-items: center;
    gap: 7px;
    height: 28px;
    margin: 0 0 4px;
    padding-left: 13px;
    font-size: 16px;
    font-weight: 400;
    color: #1f74e8;
}

.group-title.second {
    margin-top: 24px;
}

.tasks {
    list-style: none;
    margin: 0;
    padding: 0;
}

.task {
    display: flex;
    align-items: center;
    gap: 3px;
    height: 30px;
}

.task::before {
    content: "";
    width: 4px;
    height: 26px;
    border-radius: 2px;
    background: #0c8000;
}

.darkred::before {
    background: #870d0b;
}

.salmon::before {
    background: #f0985e;
}

.blue::before {
    background: #1420e6;
}

.task-body {
    flex: 1;
    display: flex;
    align-items: center;
    height: 30px;
    padding: 0 8px 0 7px;
    border-radius: 6px;
    white-space: nowrap;
}

.selected .task-body {
    background: #d5d5d5;
}

input[type="checkbox"] {
    appearance: none;
    flex: none;
    width: 13px;
    height: 14px;
    margin-right: 9px;
    border: 1px solid #808080;
    border-radius: 2px;
}

input[type="checkbox"].orange {
    border-color: #f0983c;
}

.sun {
    font-size: 12px;
    line-height: 1;
}

.task time {
    margin-left: auto;
    color: #6e6e6e;
}

.task .late {
    color: #dc2a1c;
}

.subtasks {
    gap: 5px;
    height: 17px;
    margin-left: 7px;
    padding: 0 5px 0 6px;
    border: 1px solid #4a90ea;
    border-radius: 2px;
    font-size: 12px;
    color: #2c7be5;
}

.tag {
    display: flex;
    align-items: center;
    gap: 4px;
    height: 20px;
    margin-left: 6px;
    padding: 0 6px;
    border: 1px solid #e2e2e2;
    border-radius: 10px;
    font-size: 12px;
    color: #6c6c6c;
}

.list-link {
    height: 30px;
    padding-left: 36px;
    color: #6c6c6c;
}

.list-link.add {
    gap: 8px;
    padding-left: 14px;
    color: #a8a8a8;
}

.pointer {
    position: absolute;
    top: 507px;
    right: 121px;
}

/* detail pane */
.detail {
    flex: 0 0 351px;
    padding: 18px 22px 0 23px;
    border-left: 1px solid #d4d4d4;
}

.detail-head {
    display: flex;
    align-items: flex-start;
    padding-left: 8px;
}

input[type="checkbox"].big {
    width: 16px;
    height: 16px;
    margin: 2px 11px 0 0;
}

.detail-title {
    flex: 1;
    min-width: 0;
    padding-right: 10px;
}

.detail-title label {
    display: block;
    font-size: 16px;
    line-height: 20px;
}

.detail-title .sun {
    font-size: 14px;
}

.detail-title input {
    display: block;
    height: 24px;
}

.detail-title input::placeholder {
    color: #b4b4b4;
}

.pin {
    margin-top: 2px;
}

.fields {
    margin-top: 15px;
}

.detail-head + .fields {
    margin-top: 9px;
}

.fields.close {
    margin-top: 9px;
}

.fields.last {
    margin-top: 12px;
}

.field {
    display: flex;
    gap: 10px;
    min-height: 20px;
    line-height: 20px;
}

.field.mid {
    min-height: 22px;
    line-height: 22px;
}

.field.tall {
    min-height: 26px;
    line-height: 26px;
}

.field > label, .field > .name {
    flex: 0 0 84px;
    display: flex;
    align-items: center;
    justify-content: flex-end;
    gap: 3px;
    height: 20px;
    white-space: nowrap;
    color: #6c6c6c;
}

.mid > label {
    height: 22px;
}

.tall > label {
    height: 26px;
}

.value {
    display: flex;
    align-items: center;
    gap: 8px;
    white-space: nowrap;
}

.value.boxed {
    margin-left: -2px;
}

.dot {
    width: 11px;
    height: 11px;
    margin-right: -3px;
    border-radius: 50%;
    background: #8a140c;
}

.round {
    justify-content: center;
    width: 20px;
    height: 20px;
    border: 1px solid #cfcfcf;
    border-radius: 50%;
    color: #666;
}

.date {
    width: 68px;
}

.datetime {
    width: 112px;
}

.num {
    width: 9px;
}

.clock {
    width: 40px;
}

.links {
    flex-direction: column;
    align-items: flex-start;
    gap: 4px;
}

.link {
    gap: 5px;
    height: 20px;
    padding-left: 5px;
    border: 1px solid #cdcdcd;
    border-radius: 3px;
}

.link.long {
    width: 211px;
}

.go {
    display: flex;
    align-items: center;
    justify-content: center;
    width: 14px;
    height: 18px;
    margin-left: auto;
    border-left: 1px solid #cdcdcd;
    color: #777;
}

.add-link {
    gap: 4px;
    padding-right: 8px;
    color: #6c6c6c;
}

.delegate {
    height: 18px;
    padding: 0 6px;
    border: 1px solid #b0b0b0;
    border-radius: 4px;
    font-size: 11px;
    font-weight: 500;
}

.info .field {
    min-height: 19px;
    line-height: 19px;
    color: #6c6c6c;
}

.info .name {
    height: 19px;
}

.last .field {
    margin-bottom: 5px;
}
```
